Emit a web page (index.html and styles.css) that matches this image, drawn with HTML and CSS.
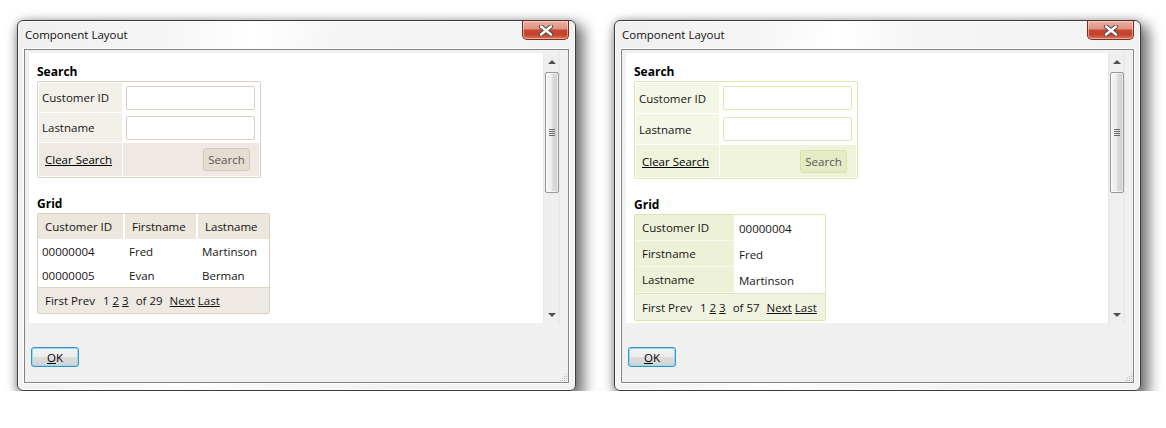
FILE: index.html
```html
<!DOCTYPE html>
<html>
<head>
<meta charset="utf-8">
<title>Component Layout</title>
<link rel="stylesheet" href="styles.css">
</head>
<body>

<div class="win win-left">
  <div class="titlebar">Component Layout</div>
  <div class="close"><svg width="16" height="11" viewBox="0 0 16 11"><path d="M3 1.5 L13 9.5 M13 1.5 L3 9.5" stroke="#4a4a4a" stroke-width="4.4" stroke-linecap="round" fill="none"/><path d="M3 1.5 L13 9.5 M13 1.5 L3 9.5" stroke="#ffffff" stroke-width="2.4" stroke-linecap="round" fill="none"/></svg></div>
  <div class="client">
    <div class="scroller">
      <div class="viewport">
        <div class="heading">Search</div>
        <div class="search tan">
          <div class="lbl">Customer ID</div>
          <div class="fld"><span class="input"></span></div>
          <div class="lbl">Lastname</div>
          <div class="fld"><span class="input"></span></div>
          <div class="foot-l"><span class="link">Clear Search</span></div>
          <div class="foot-r"><span class="btn">Search</span></div>
        </div>
        <div class="heading heading-grid">Grid</div>
        <div class="grid tan">
          <div class="g-head">Customer ID</div>
          <div class="g-head">Firstname</div>
          <div class="g-head">Lastname</div>
          <div class="g-cell">00000004</div>
          <div class="g-cell">Fred</div>
          <div class="g-cell">Martinson</div>
          <div class="g-cell">00000005</div>
          <div class="g-cell">Evan</div>
          <div class="g-cell">Berman</div>
          <div class="pager">First Prev<span class="pg-num">1</span><u class="pg-u">2</u><u class="pg-u">3</u><span class="pg-of">of 29</span><u class="pg-next">Next</u><u class="pg-u">Last</u></div>
        </div>
      </div>
      <div class="sb">
        <div class="sb-btn"><span class="arr-up"></span></div>
        <div class="sb-thumb"><span class="grip"></span></div>
        <div class="sb-track"></div>
        <div class="sb-btn"><span class="arr-down"></span></div>
      </div>
    </div>
    <div class="actions"><span class="ok"><u>O</u>K</span></div>
    <svg class="gripper" width="9" height="9" viewBox="0 0 9 9"><g fill="#b4b4b4"><rect x="7" y="1" width="1" height="1"/><rect x="5" y="3" width="1" height="1"/><rect x="7" y="3" width="1" height="1"/><rect x="3" y="5" width="1" height="1"/><rect x="5" y="5" width="1" height="1"/><rect x="7" y="5" width="1" height="1"/><rect x="1" y="7" width="1" height="1"/><rect x="3" y="7" width="1" height="1"/><rect x="5" y="7" width="1" height="1"/><rect x="7" y="7" width="1" height="1"/></g></svg>
  </div>
</div>

<div class="win win-right">
  <div class="titlebar">Component Layout</div>
  <div class="close"><svg width="16" height="11" viewBox="0 0 16 11"><path d="M3 1.5 L13 9.5 M13 1.5 L3 9.5" stroke="#4a4a4a" stroke-width="4.4" stroke-linecap="round" fill="none"/><path d="M3 1.5 L13 9.5 M13 1.5 L3 9.5" stroke="#ffffff" stroke-width="2.4" stroke-linecap="round" fill="none"/></svg></div>
  <div class="client">
    <div class="scroller">
      <div class="viewport">
        <div class="heading">Search</div>
        <div class="search green">
          <div class="lbl">Customer ID</div>
          <div class="fld"><span class="input"></span></div>
          <div class="lbl">Lastname</div>
          <div class="fld"><span class="input"></span></div>
          <div class="foot-l"><span class="link">Clear Search</span></div>
          <div class="foot-r"><span class="btn">Search</span></div>
        </div>
        <div class="heading heading-grid">Grid</div>
        <div class="form-grid green">
          <div class="fg-lbl">Customer ID</div>
          <div class="fg-val">00000004</div>
          <div class="fg-lbl">Firstname</div>
          <div class="fg-val">Fred</div>
          <div class="fg-lbl">Lastname</div>
          <div class="fg-val">Martinson</div>
          <div class="pager">First Prev<span class="pg-num">1</span><u class="pg-u">2</u><u class="pg-u">3</u><span class="pg-of">of 57</span><u class="pg-next">Next</u><u class="pg-u">Last</u></div>
        </div>
      </div>
      <div class="sb">
        <div class="sb-btn"><span class="arr-up"></span></div>
        <div class="sb-thumb"><span class="grip"></span></div>
        <div class="sb-track"></div>
        <div class="sb-btn"><span class="arr-down"></span></div>
      </div>
    </div>
    <div class="actions"><span class="ok"><u>O</u>K</span></div>
    <svg class="gripper" width="9" height="9" viewBox="0 0 9 9"><g fill="#b4b4b4"><rect x="7" y="1" width="1" height="1"/><rect x="5" y="3" width="1" height="1"/><rect x="7" y="3" width="1" height="1"/><rect x="3" y="5" width="1" height="1"/><rect x="5" y="5" width="1" height="1"/><rect x="7" y="5" width="1" height="1"/><rect x="1" y="7" width="1" height="1"/><rect x="3" y="7" width="1" height="1"/><rect x="5" y="7" width="1" height="1"/><rect x="7" y="7" width="1" height="1"/></g></svg>
  </div>
</div>

</body>
</html>
```

FILE: styles.css
```css
* { box-sizing: border-box; }
html, body { margin: 0; background: #ffffff; }
body {
  padding: 20px 0 0 17px;
  display: flex;
  gap: 38px;
  align-items: flex-start;
  font-family: "Open Sans", "Noto Sans", sans-serif;
  font-size: 11.5px;
  color: #141414;
}

/* window frame */
.win {
  position: relative;
  display: flex;
  flex-direction: column;
  height: 371px;
  padding: 0 6px 7px 6px;
  border: 1px solid #3c3c3c;
  border-radius: 6px;
  background: linear-gradient(100deg, #efefef 0%, #f6f6f6 25%, #ffffff 38%, #f5f5f5 52%, #f1f1f1 100%);
  box-shadow: inset 0 0 0 1px #fbfbfb, 5px 7px 14px 3px rgba(0, 0, 0, 0.55), -1px 0 6px rgba(0, 0, 0, 0.15);
}
.win-left { width: 559px; }
.win-right { width: 527px; }

.titlebar {
  height: 28px;
  padding: 5px 0 0 1px;
  line-height: 18px;
  color: #111;
}

.close {
  position: absolute;
  top: -1px;
  right: 6px;
  width: 47px;
  height: 20px;
  display: flex;
  align-items: center;
  justify-content: center;
  border: 1px solid #7a2e22;
  border-top-color: #5a2a22;
  border-radius: 0 0 5px 5px;
  background: linear-gradient(to bottom, #eab2a6 0%, #df9484 42%, #c84530 52%, #c5432d 75%, #d9745a 100%);
  box-shadow: inset 0 0 0 1px rgba(255, 220, 210, 0.55);
}

/* client area */
.client {
  position: relative;
  flex: 1;
  display: flex;
  flex-direction: column;
  padding: 3px 8px 0 4px;
  border: 1px solid #858585;
  background: #f0f0f0;
  box-shadow: 0 0 0 1px #ffffff;
}

.scroller {
  display: flex;
  height: 270px;
}
.viewport {
  flex: 1;
  background: #ffffff;
  padding: 11px 8px 0 8px;
}

.heading {
  font-weight: 700;
  font-size: 12px;
  line-height: 16px;
  color: #000;
  margin-bottom: 1px;
}
.heading-grid { margin-top: 18px; margin-bottom: 1px; }

/* search panel */
.search {
  display: grid;
  width: 224px;
  grid-template-columns: 83px 1fr;
  gap: 1px;
  padding: 1px;
  border: 1px solid;
  border-radius: 2px;
  background: #ffffff;
}
.tan.search { grid-template-rows: 29px 29px 33px; }
.green.search { grid-template-rows: 30px 30px 32px; }

.lbl {
  display: flex;
  align-items: center;
  padding-left: 3px;
}
.fld {
  display: flex;
  align-items: center;
  padding-left: 3px;
}
.input {
  width: 129px;
  height: 24px;
  border: 1px solid;
  border-radius: 2px;
  background: #fff;
}
.foot-l {
  display: flex;
  align-items: center;
  padding-left: 6px;
}
.foot-r {
  display: flex;
  align-items: center;
  justify-content: flex-end;
  padding-right: 9px;
}
.link { text-decoration: underline; color: #000; }
.btn {
  width: 47px;
  height: 23px;
  display: flex;
  align-items: center;
  justify-content: center;
  border: 1px solid;
  border-radius: 3px;
  color: #555;
}

.tan.search { border-color: #d9d0c2; }
.tan .lbl { background: #f3f0ea; }
.tan .foot-l, .tan .foot-r { background: #eeeae3; }
.tan .input { border-color: #d8cfc1; }
.tan .btn { background: #e4ddd1; border-color: #d4cab9; }

.green.search { border-color: #dce5ac; }
.green .lbl { background: #f5f7e6; }
.green .foot-l, .green .foot-r { background: #eff3dc; }
.green .input { border-color: #dfe6b7; }
.green .btn { background: #e5ecc5; border-color: #d8e1ac; }

/* table grid */
.grid {
  display: grid;
  width: 233px;
  grid-template-columns: 85px 71px 71px;
  grid-template-rows: 25px 24px 24px 26px;
  column-gap: 2px;
  border: 1px solid #d9d0c2;
  border-radius: 2px;
  background: #ffffff;
}
.g-head {
  display: flex;
  align-items: center;
  padding-left: 7px;
  background: #ece6dd;
}
.g-cell {
  display: flex;
  align-items: center;
  padding-left: 4px;
}
.pager {
  grid-column: 1 / -1;
  display: flex;
  align-items: center;
  padding-left: 7px;
  white-space: nowrap;
}
.grid .pager { background: #eeeae3; border-top: 1px solid #ddd5c8; }
.pg-num { margin-left: 8px; }
.pg-u { margin-left: 3px; }
.pg-of { margin-left: 7px; }
.pg-next { margin-left: 7px; }

/* form-style grid (right) */
.form-grid {
  display: grid;
  width: 192px;
  grid-template-columns: 99px 1fr;
  grid-template-rows: 26px 26px 26px 27px;
  border: 1px solid #dce5ac;
  border-radius: 2px;
  background: #ffffff;
}
.fg-lbl {
  display: flex;
  align-items: center;
  padding-left: 7px;
  background: #edf1d8;
  border-bottom: 1px solid #f8faee;
}
.fg-val {
  display: flex;
  align-items: center;
  padding-left: 5px;
}
.form-grid .pager { background: #f0f3df; border-top: 1px solid #dfe6bf; }

/* scrollbar */
.sb {
  width: 17px;
  display: flex;
  flex-direction: column;
  background: linear-gradient(to right, #e4e4e4 0, #efefef 2px, #efefef 15px, #e4e4e4 17px);
}
.sb-btn {
  height: 17px;
  display: flex;
  align-items: center;
  justify-content: center;
}
.arr-up, .arr-down {
  width: 0;
  height: 0;
  border-left: 4px solid transparent;
  border-right: 4px solid transparent;
}
.arr-up { border-bottom: 4px solid #505050; }
.arr-down { border-top: 4px solid #505050; }
.sb-thumb {
  height: 121px;
  margin: 2px 1px 0 2px;
  display: flex;
  align-items: center;
  justify-content: center;
  border: 1px solid #979797;
  border-radius: 2px;
  background: linear-gradient(to right, #f6f6f6 0%, #ededed 45%, #dcdcdc 55%, #cdcdcd 100%);
  box-shadow: inset 0 0 0 1px rgba(255, 255, 255, 0.6);
}
.grip {
  width: 6px;
  height: 7px;
  background: repeating-linear-gradient(to bottom, #6a6a6a 0, #6a6a6a 1px, transparent 1px, transparent 2px);
}
.sb-track { flex: 1; }

/* bottom actions */
.actions {
  padding: 24px 0 0 2px;
}
.ok {
  width: 48px;
  height: 20px;
  display: flex;
  align-items: center;
  justify-content: center;
  border: 1px solid #3c8fc4;
  border-radius: 3px;
  background: linear-gradient(to bottom, #f4f4f4 0%, #ececec 48%, #dddddd 52%, #d2d2d2 100%);
  box-shadow: inset 0 0 0 1px #8fdcf5;
  color: #000;
}
.ok u { text-decoration: underline; }

.gripper {
  position: absolute;
  right: 0;
  bottom: 0;
}
```
